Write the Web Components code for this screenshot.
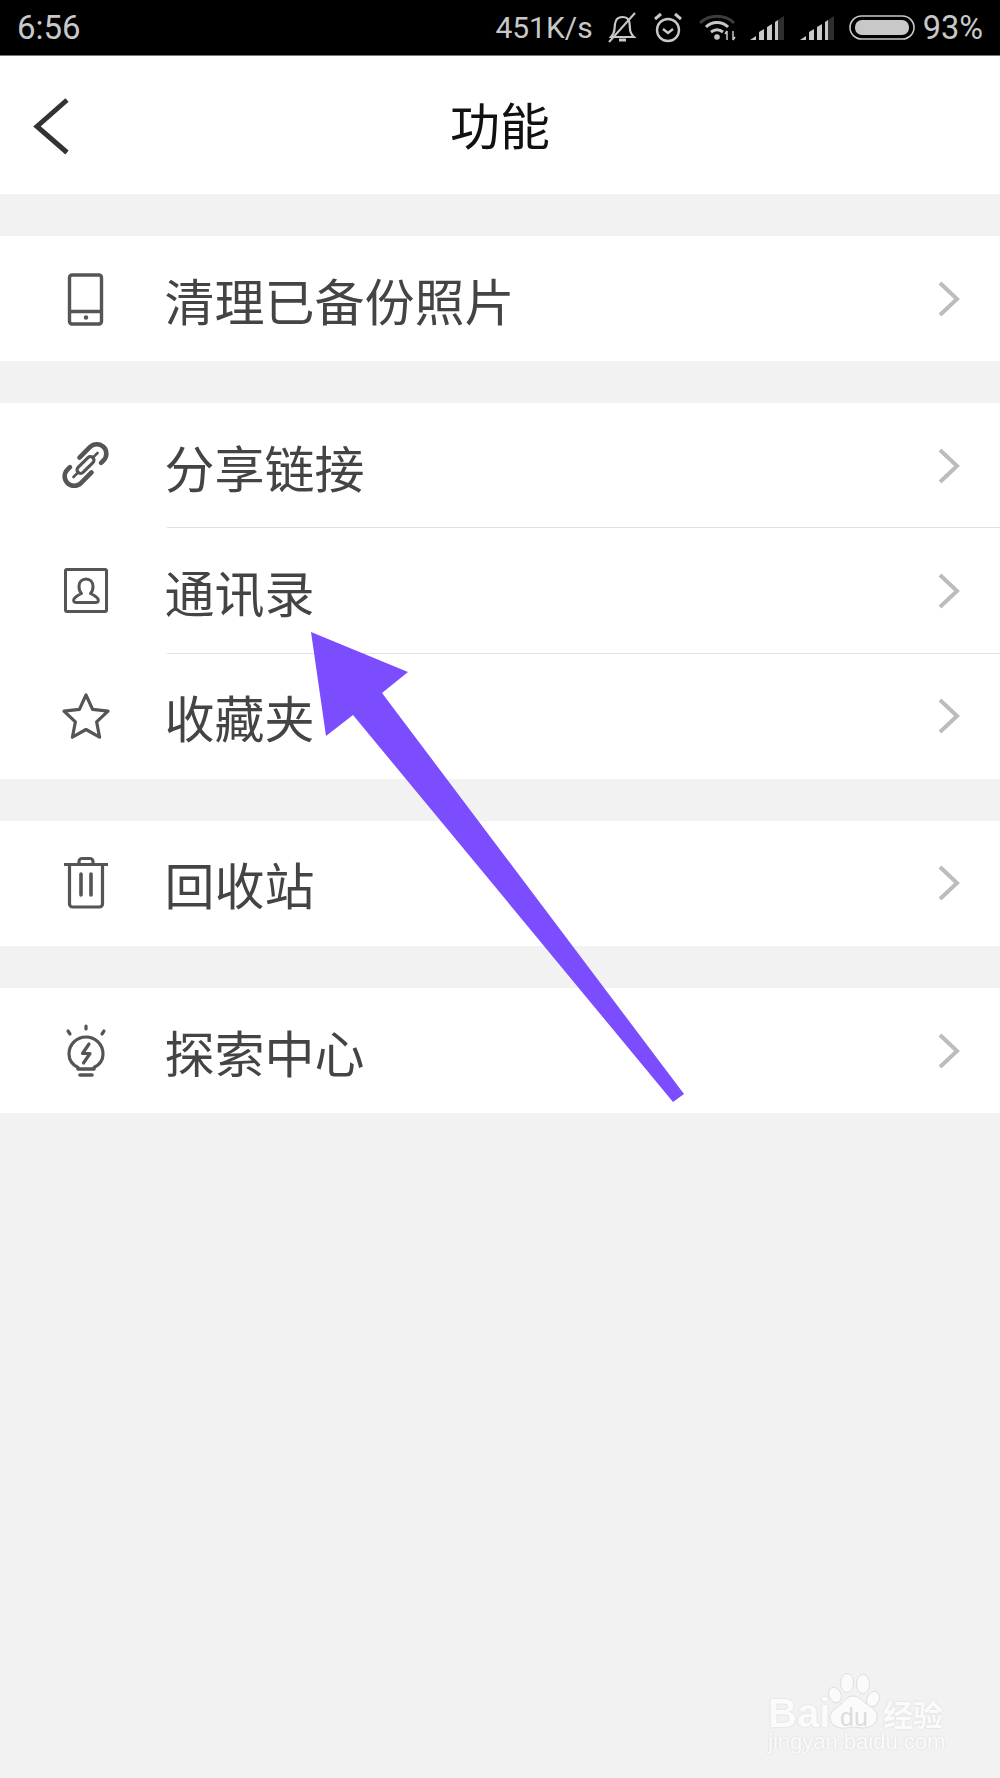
<!DOCTYPE html>
<html lang="zh">
<head>
<meta charset="utf-8">
<title>功能</title>
<style>
  html, body { margin: 0; padding: 0; }
  body {
    width: 1000px;
    height: 1778px;
    position: relative;
    overflow: hidden;
    background: #f2f2f2;
    font-family: "Noto Sans CJK SC", "Noto Sans", sans-serif;
  }
</style>
</head>
<body>
<status-bar></status-bar>
<app-header>功能</app-header>

<menu-group>
  <menu-row>
    <svg slot="icon" viewBox="0 0 60 60" width="60" height="60" fill="none" stroke="#555" stroke-width="3.400">
      <rect x="13.500" y="6" width="32" height="49" rx="2.500"/>
      <path d="M13.500 42.500h32"/>
      <circle cx="30" cy="48.500" r="2.200" fill="#555" stroke="none"/>
    </svg>
    清理已备份照片
  </menu-row>
</menu-group>

<menu-group>
  <menu-row divider>
    <svg slot="icon" viewBox="0 0 60 60" width="60" height="60" fill="none" stroke="#555" stroke-width="4.600" stroke-linecap="round">
      <g transform="rotate(-45 29.500 29)">
        <path d="M17 19.500h-3.500a9.500 9.500 0 0 0 0 19h15"/>
        <path d="M42 38.500h3.500a9.500 9.500 0 0 0 0-19h-15"/>
        <rect x="19" y="25.500" width="21" height="7" rx="3.500" stroke-width="3.200"/>
        <path d="M12.500 29h7M39.500 29h7" stroke-width="2.600"/>
      </g>
    </svg>
    分享链接
  </menu-row>
  <menu-row divider>
    <svg slot="icon" viewBox="0 0 60 60" width="60" height="60" fill="none" stroke="#555" stroke-width="3" stroke-linejoin="round">
      <rect x="9.500" y="8.500" width="41" height="42" rx="1.500"/>
      <path d="M25.500 32.500c-1.500-1.500-2.500-4-2.500-7 0-4.500 3-7.500 7-7.500s7 3 7 7.500c0 3-1 5.500-2.500 7 3 1.500 6 3 7.500 5.500 1 1.800 0 3.500-2 3.500H20c-2 0-3-1.700-2-3.500 1.500-2.500 4.500-4 7.500-5.500z"/>
    </svg>
    通讯录
  </menu-row>
  <menu-row>
    <svg slot="icon" viewBox="0 0 60 60" width="60" height="60" fill="none" stroke="#555" stroke-width="3.200" stroke-linejoin="round">
      <path d="M30 9l6.600 14.300 15.400 1.900-11.400 10.600 3 15.400L30 43.500l-13.600 7.700 3-15.400L8 25.200l15.400-1.900z"/>
    </svg>
    收藏夹
  </menu-row>
</menu-group>

<menu-group>
  <menu-row>
    <svg slot="icon" viewBox="0 0 60 60" width="60" height="60" fill="none" stroke="#555" stroke-width="3.200" stroke-linejoin="round">
      <path d="M8 11.500h44"/>
      <path d="M23 11V8.500a3 3 0 0 1 3-3h8a3 3 0 0 1 3 3V11"/>
      <path d="M13.500 11.500V51a3 3 0 0 0 3 3h27a3 3 0 0 0 3-3V11.500"/>
      <path d="M25 21v21M35 21v21" stroke-width="3.600" stroke-linecap="round"/>
    </svg>
    回收站
  </menu-row>
</menu-group>

<menu-group>
  <menu-row>
    <svg slot="icon" viewBox="0 0 60 60" width="60" height="60" fill="none" stroke="#555" stroke-width="3.200" stroke-linecap="round" stroke-linejoin="round">
      <path d="M22 46.500c-6-3-9-8-9-13.500a17 17 0 0 1 34 0c0 5.500-3 10.500-9 13.500"/>
      <path d="M30 5v3M12 10l2 3M48 10l-2 3"/>
      <path d="M33 23l-6.500 9.500h7.500L27.500 42"/>
      <path d="M22 48h16M24 54h12" stroke-width="3.600"/>
    </svg>
    探索中心
  </menu-row>
</menu-group>

<baidu-mark></baidu-mark>
<arrow-mark></arrow-mark>

<script>
class StatusBar extends HTMLElement {
  connectedCallback() {
    this.attachShadow({ mode: 'open' });
    this.shadowRoot.innerHTML = `
      <style>
        :host {
          display: flex;
          align-items: center;
          justify-content: space-between;
          box-sizing: border-box;
          height: 56px;
          padding: 0 17px;
          background: #000;
          border-bottom: 1px solid #777;
          color: #c8c8c8;
          font: 400 30px Roboto, "Liberation Sans", sans-serif;
        }
        .right { display: flex; align-items: center; }
        svg { display: block; flex: none; }
        .time { font-size: 33px; }
        .speed { margin-right: 15px; }
        .alarm { margin-left: 16px; }
        .wifi { margin-left: 16px; }
        .sig1 { margin-left: 14px; }
        .sig2 { margin-left: 16px; }
        .batt { margin-left: 15px; }
        .pct { margin-left: 8px; font-size: 32.500px; }
      </style>
      <span class="time">6:56</span>
      <div class="right">
        <span class="speed">451K/s</span>
        <svg width="29" height="31" viewBox="0 0 29 31" fill="none" stroke="#c8c8c8" stroke-width="2.200">
          <path d="M3 25h23c-3-3-4-5-4-8l-.5-6c-.5-4-3.500-6-7-6-4 0-7 2.500-7.500 7l-.5 5c0 3-1 5-3.500 8z"/>
          <path d="M11 28h7" stroke-width="3"/>
          <path d="M1 30L27 1" stroke-width="2"/>
        </svg>
        <svg class="alarm" width="30" height="31" viewBox="0 0 30 31" fill="none" stroke="#c8c8c8" stroke-width="2.400">
          <circle cx="15" cy="18" r="11"/>
          <path d="M10 17l5 4 5-4"/>
          <path d="M2 7l6-5M28 7l-6-5" stroke-width="3"/>
        </svg>
        <svg class="wifi" width="37" height="27" viewBox="0 0 37 27" fill="none" stroke-width="3">
          <path d="M1 9C10 0 26 0 35 9" stroke="#3c3c3c"/>
          <path d="M7 13c6-6 16-6 22 0" stroke="#c8c8c8"/>
          <path d="M12 18c4-3 8-3 12 0" stroke="#c8c8c8"/>
          <circle cx="18" cy="23" r="2.800" fill="#c8c8c8" stroke="none"/>
          <path d="M28 26v-9M28 17l-2 3M34 17v9M34 26l2-3" stroke="#c8c8c8" stroke-width="1.500"/>
        </svg>
        <svg class="sig1" width="34" height="24" viewBox="0 0 34 24">
          <path d="M0 24l6-4v4zM9 24v-8l5-3v11zM17 24V11l5-3v16zM25 24V6l3-2v20z" fill="#c8c8c8"/>
          <path d="M28 4l6-4v24h-6z" fill="#2e2e2e"/>
        </svg>
        <svg class="sig2" width="34" height="24" viewBox="0 0 34 24">
          <path d="M0 24l6-4v4zM9 24v-8l5-3v11zM17 24V11l5-3v16zM25 24V6l3-2v20z" fill="#c8c8c8"/>
          <path d="M28 4l6-4v24h-6z" fill="#2e2e2e"/>
        </svg>
        <svg class="batt" width="66" height="25" viewBox="0 0 66 25" fill="none">
          <rect x="1" y="1" width="64" height="23" rx="11.500" stroke="#c8c8c8" stroke-width="1.600"/>
          <rect x="6" y="5" width="54" height="15" rx="7" fill="#c8c8c8"/>
        </svg>
        <span class="pct">93%</span>
      </div>
    `;
  }
}

class AppHeader extends HTMLElement {
  connectedCallback() {
    this.attachShadow({ mode: 'open' });
    this.shadowRoot.innerHTML = `
      <style>
        :host {
          display: flex;
          align-items: center;
          justify-content: center;
          position: relative;
          box-sizing: border-box;
          height: 138px;
          padding-bottom: 4px;
          background: #fff;
          color: #111;
          font-size: 50px;
        }
        svg { position: absolute; left: 32px; top: 41px; }
      </style>
      <svg width="40" height="60" viewBox="0 0 40 60" fill="none" stroke="#333" stroke-width="5">
        <path d="M35 3L5 29.500l30 26"/>
      </svg>
      <slot></slot>
    `;
  }
}

class MenuGroup extends HTMLElement {
  connectedCallback() {
    this.attachShadow({ mode: 'open' });
    this.shadowRoot.innerHTML = `
      <style>
        :host { display: block; margin-top: 42px; background: #fff; }
      </style>
      <slot></slot>
    `;
  }
}

class MenuRow extends HTMLElement {
  connectedCallback() {
    this.attachShadow({ mode: 'open' });
    this.shadowRoot.innerHTML = `
      <style>
        :host {
          display: flex;
          align-items: center;
          position: relative;
          box-sizing: border-box;
          height: 125.200px;
          padding-left: 56px;
          color: #444;
          font-size: 50px;
        }
        :host([divider]) .line { display: block; }
        .line {
          display: none;
          position: absolute;
          left: 167px;
          right: 0;
          bottom: 0;
          height: 1px;
          background: #e2e2e2;
        }
        .icon { width: 108.500px; flex: none; display: flex; }
        .label { flex: 1; }
        .chev { margin-right: 40px; display: block; }
      </style>
      <span class="icon"><slot name="icon"></slot></span>
      <span class="label"><slot></slot></span>
      <svg class="chev" width="22" height="36" viewBox="0 0 22 36" fill="none" stroke="#bcbcbc" stroke-width="4">
        <path d="M2 2l17 16L2 34"/>
      </svg>
      <span class="line"></span>
    `;
  }
}

class BaiduMark extends HTMLElement {
  connectedCallback() {
    this.attachShadow({ mode: 'open' });
    this.shadowRoot.innerHTML = `
      <style>
        :host {
          display: block;
          position: absolute;
          left: 766px;
          top: 1668px;
          width: 184px;
          height: 100px;
          color: #fbfbfb;
          font-family: "Liberation Sans", sans-serif;
          text-shadow: 0 0 2px #d2d2d2;
        }
        .bai, .jing, .cn, .du { position: absolute; }
        .bai { left: 2px; top: 27px; font-size: 40px; line-height: 36px; font-weight: 700; }
        .cn {
          left: 117px; top: 30px; font-size: 30px; line-height: 30px;
          font-family: "Noto Sans CJK SC", sans-serif; font-weight: 700;
        }
        .jing { left: 2px; top: 65px; font-size: 22px; line-height: 18px; }
        .du { left: 74px; top: 39px; font-size: 25px; line-height: 21px; color: #dcdcdc; text-shadow: none; }
        svg { position: absolute; left: 62px; top: 4px; }
      </style>
      <svg width="52" height="58" viewBox="0 0 52 58" fill="#fbfbfb" stroke="#dedede">
        <ellipse cx="7" cy="23" rx="6" ry="8" transform="rotate(-25 7 23)"/>
        <ellipse cx="19" cy="11" rx="6.500" ry="9.500"/>
        <ellipse cx="35" cy="12" rx="6.500" ry="9.500"/>
        <ellipse cx="45" cy="27" rx="6" ry="8" transform="rotate(25 45 27)"/>
        <path d="M25 24c6 0 9 5 14 8 6 4 11 8 10 14-1 7-8 10-15 10-6-1-11-1-16 0-8 1-16-3-16-10 0-7 6-10 11-14 4-3 6-8 12-8z"/>
      </svg>
      <span class="bai">Bai</span>
      <span class="du">du</span>
      <span class="cn">经验</span>
      <span class="jing">jingyan.baidu.com</span>
    `;
  }
}

class ArrowMark extends HTMLElement {
  connectedCallback() {
    this.attachShadow({ mode: 'open' });
    this.shadowRoot.innerHTML = `
      <style>
        :host { display: block; position: absolute; left: 0; top: 0; pointer-events: none; }
        svg { display: block; }
      </style>
      <svg width="1000" height="1778" viewBox="0 0 1000 1778">
        <path d="M311 632L408 672L382 693L684 1094L673 1102L353 715L326 736Z" fill="#7b4dff"/>
      </svg>
    `;
  }
}

customElements.define('status-bar', StatusBar);
customElements.define('app-header', AppHeader);
customElements.define('menu-group', MenuGroup);
customElements.define('menu-row', MenuRow);
customElements.define('baidu-mark', BaiduMark);
customElements.define('arrow-mark', ArrowMark);
</script>
</body>
</html>
